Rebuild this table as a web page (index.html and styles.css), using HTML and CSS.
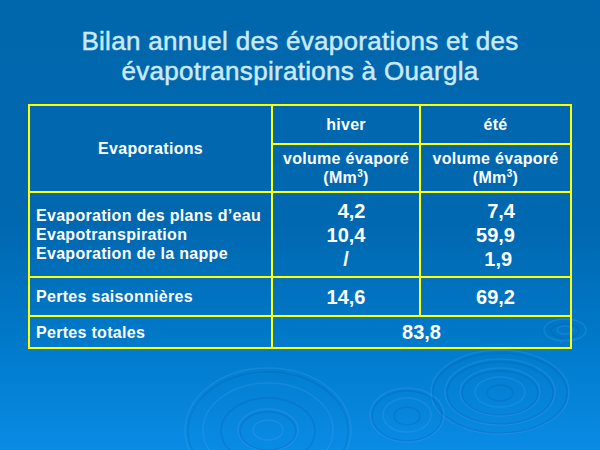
FILE: index.html
```html
<!DOCTYPE html>
<html lang="fr">
<head>
<meta charset="utf-8">
<title>Bilan annuel des évaporations</title>
<link rel="stylesheet" href="styles.css">
</head>
<body>
<div class="slide">
  <svg class="ripples" width="600" height="450" viewBox="0 0 600 450" aria-hidden="true">
    <g class="rip">
      <ellipse cx="500" cy="392" rx="69" ry="42" class="l"/>
      <ellipse cx="500" cy="393" rx="67" ry="40" class="d"/>
      <ellipse cx="500" cy="392" rx="55" ry="33" class="l"/>
      <ellipse cx="500" cy="393" rx="53" ry="31" class="d"/>
      <ellipse cx="500" cy="392" rx="40" ry="24" class="l"/>
      <ellipse cx="500" cy="393" rx="38" ry="22" class="d"/>
      <ellipse cx="500" cy="392" rx="25" ry="15" class="l"/>
      <ellipse cx="500" cy="393" rx="13" ry="8" class="d"/>
    </g>
    <g class="rip">
      <ellipse cx="268" cy="430" rx="83" ry="62" class="l"/>
      <ellipse cx="268" cy="431" rx="80" ry="59" class="d"/>
      <ellipse cx="268" cy="430" rx="65" ry="47" class="l"/>
      <ellipse cx="268" cy="431" rx="47" ry="33" class="d"/>
      <ellipse cx="268" cy="430" rx="30" ry="21" class="l"/>
      <ellipse cx="268" cy="431" rx="28" ry="19" class="d"/>
      <ellipse cx="268" cy="430" rx="15" ry="10" class="l"/>
    </g>
    <g class="rip">
      <ellipse cx="407" cy="415" rx="37" ry="27" class="l"/>
      <ellipse cx="407" cy="416" rx="35" ry="25" class="d"/>
      <ellipse cx="407" cy="415" rx="24" ry="17" class="l"/>
      <ellipse cx="407" cy="416" rx="13" ry="9" class="d"/>
    </g>
    <g class="rip">
      <ellipse cx="565" cy="330" rx="21" ry="11" class="l"/>
      <ellipse cx="565" cy="331" rx="14" ry="7" class="d"/>
      <ellipse cx="565" cy="330" rx="8" ry="4" class="l"/>
    </g>
  </svg>

  <div class="content">
    <h1 class="title">Bilan annuel des évaporations et des<br>évapotranspirations à Ouargla</h1>

    <table class="bilan">
      <colgroup>
        <col class="c1"><col class="c2"><col class="c3">
      </colgroup>
      <tr class="r1">
        <th rowspan="2" class="center">Evaporations</th>
        <th class="center">hiver</th>
        <th class="center">été</th>
      </tr>
      <tr class="r2">
        <th class="center">volume évaporé<br>(Mm<sup>3</sup>)</th>
        <th class="center">volume évaporé<br>(Mm<sup>3</sup>)</th>
      </tr>
      <tr class="r3">
        <td class="label lines">Evaporation des plans d’eau<br>Evapotranspiration<br>Evaporation de la nappe</td>
        <td class="num lines-num">&nbsp;&nbsp;4,2<br>10,4<br>/</td>
        <td class="num lines-num">&nbsp;&nbsp;7,4<br>59,9<br>&nbsp;1,9</td>
      </tr>
      <tr class="r4">
        <td class="label">Pertes saisonnières</td>
        <td class="num">14,6</td>
        <td class="num">69,2</td>
      </tr>
      <tr class="r5">
        <td class="label">Pertes totales</td>
        <td class="num" colspan="2">83,8</td>
      </tr>
    </table>
  </div>
</div>
</body>
</html>
```

FILE: styles.css
```css
html, body {
  margin: 0;
  padding: 0;
}

body {
  width: 600px;
  height: 450px;
  overflow: hidden;
  font-family: "Liberation Sans", Arial, sans-serif;
}

.slide {
  position: relative;
  width: 600px;
  height: 450px;
  background: linear-gradient(to bottom, #0067ad 0%, #0068b0 50%, #0079c9 75%, #0a8be4 100%);
  overflow: hidden;
}

.ripples {
  position: absolute;
  left: 0;
  top: 0;
}

.rip ellipse {
  fill: none;
  stroke-width: 1.5;
}

.rip .l {
  stroke: rgba(80, 170, 250, 0.22);
}

.rip .d {
  stroke: rgba(0, 60, 140, 0.14);
}

.content {
  position: relative;
  display: flex;
  flex-direction: column;
  align-items: center;
  padding-top: 26px;
}

.title {
  margin: 0;
  font-size: 26px;
  line-height: 30px;
  font-weight: normal;
  color: #cbe9fb;
  text-align: center;
  letter-spacing: 0.3px;
  -webkit-text-stroke: 0.5px #cbe9fb;
}

.bilan {
  margin-top: 18px;
  width: 542px;
  border-collapse: collapse;
  table-layout: fixed;
  color: #ffffff;
  font-weight: bold;
}

.c1 { width: 243px; }
.c2 { width: 148px; }
.c3 { width: 151px; }

.bilan th,
.bilan td {
  border: 2px solid #ffff00;
  padding: 0 6px;
  vertical-align: middle;
  font-size: 16px;
  line-height: 19px;
  font-weight: bold;
  letter-spacing: 0.3px;
}

.center {
  text-align: center;
}

.r1 { height: 39px; }
.r2 { height: 48px; }
.r3 { height: 85px; }
.r4 { height: 39px; }
.r5 { height: 32px; }

.label {
  text-align: left;
  padding-left: 5px;
}

.lines {
  line-height: 20px;
}

.bilan td.num {
  text-align: center;
  font-size: 20px;
  line-height: 22px;
  letter-spacing: 0;
}

.bilan td.lines-num {
  line-height: 24px;
}

sup {
  font-size: 10px;
  line-height: 0;
  vertical-align: 6px;
}
```
